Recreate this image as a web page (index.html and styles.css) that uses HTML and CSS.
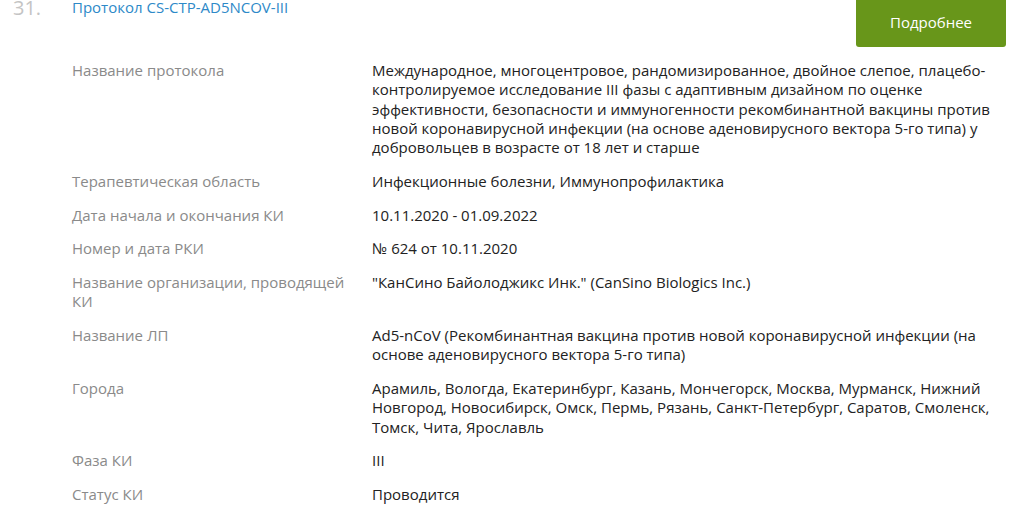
FILE: index.html
```html
<!DOCTYPE html>
<html lang="ru">
<head>
<meta charset="utf-8">
<link rel="stylesheet" href="styles.css">
</head>
<body>
<div class="item">
  <div class="num">31.</div>
  <div class="body">
    <div class="head">
      <a class="title" href="#">Протокол CS-CTP-AD5NCOV-III</a>
      <a class="btn" href="#">Подробнее</a>
    </div>
    <dl class="props">
      <dt>Название протокола</dt>
      <dd>Международное, многоцентровое, рандомизированное, двойное слепое, плацебо-контролируемое исследование III фазы с адаптивным дизайном по оценке эффективности, безопасности и иммуногенности рекомбинантной вакцины против новой коронавирусной инфекции (на основе аденовирусного вектора 5-го типа) у добровольцев в возрасте от 18 лет и старше</dd>
      <dt>Терапевтическая область</dt>
      <dd>Инфекционные болезни, Иммунопрофилактика</dd>
      <dt>Дата начала и окончания КИ</dt>
      <dd>10.11.2020 - 01.09.2022</dd>
      <dt>Номер и дата РКИ</dt>
      <dd>№ 624 от 10.11.2020</dd>
      <dt>Название организации, проводящей КИ</dt>
      <dd>"КанСино Байолоджикс Инк." (CanSino Biologics Inc.)</dd>
      <dt>Название ЛП</dt>
      <dd>Ad5-nCoV (Рекомбинантная вакцина против новой коронавирусной инфекции (на основе аденовирусного вектора 5-го типа)</dd>
      <dt>Города</dt>
      <dd>Арамиль, Вологда, Екатеринбург, Казань, Мончегорск, Москва, Мурманск, Нижний Новгород, Новосибирск, Омск, Пермь, Рязань, Санкт-Петербург, Саратов, Смоленск, Томск, Чита, Ярославль</dd>
      <dt>Фаза КИ</dt>
      <dd>III</dd>
      <dt>Статус КИ</dt>
      <dd>Проводится</dd>
    </dl>
  </div>
</div>
</body>
</html>
```
FILE: styles.css
```css
html, body {
  margin: 0;
  padding: 0;
  background: #fff;
}
body {
  font-family: "Open Sans", "Noto Sans", sans-serif;
  font-size: 15px;
  line-height: 19.25px;
  color: #222;
}
.item {
  display: flex;
  margin-top: -4px;
  padding-left: 13px;
  width: 997px;
}
.num {
  width: 59px;
  flex: none;
  font-size: 20px;
  line-height: 22px;
  color: #c4c4c4;
  padding-top: 1px;
}
.body {
  flex: 1;
}
.head {
  display: flex;
  justify-content: space-between;
  align-items: flex-start;
}
.title {
  color: #2d89c8;
  text-decoration: none;
  font-size: 15px;
  line-height: 22px;
  padding-top: 0;
}
.btn {
  display: flex;
  align-items: center;
  justify-content: center;
  width: 150px;
  height: 51px;
  margin-right: 4px;
  box-sizing: border-box;
  padding-top: 2px;
  background: #68961a;
  color: #fff;
  text-decoration: none;
  border-radius: 3px;
  font-size: 15px;
}
.props {
  display: grid;
  grid-template-columns: 300px 1fr;
  row-gap: 14.5px;
  margin: 14px 0 0 0;
}
.props dt {
  color: #8a8a8a;
  padding-right: 10px;
}
.props dd {
  margin: 0;
  color: #222;
}
```
